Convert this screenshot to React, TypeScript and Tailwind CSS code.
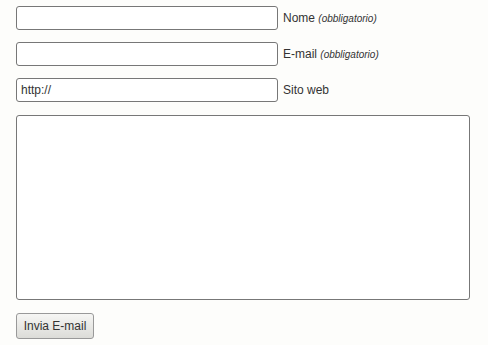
export default function App() {
  const field =
    'h-6 w-[262px] rounded-[3px] border border-[#777] bg-white px-1 text-[12px] text-[#333] outline-none';

  return (
    <div className="min-h-[345px] bg-[#fdfdfb] px-4 pt-[6px] font-['Liberation_Sans',Arial,sans-serif] text-[12px] text-[#333]">
      <div className="flex items-center gap-[5px]">
        <input className={field} />
        <label>
          Nome <em className="text-[10px]">(obbligatorio)</em>
        </label>
      </div>
      <div className="mt-3 flex items-center gap-[5px]">
        <input className={field} />
        <label>
          E-mail <em className="text-[10px]">(obbligatorio)</em>
        </label>
      </div>
      <div className="mt-3 flex items-center gap-[5px]">
        <input className={field} defaultValue="http://" />
        <label>Sito web</label>
      </div>
      <textarea className="mt-[13px] block h-[185px] w-[454px] resize-none rounded-[3px] border border-[#777] bg-white outline-none" />
      <button className="mt-[13px] h-[26px] w-[78px] rounded-[3px] border border-[#999] bg-gradient-to-b from-[#f6f6f4] to-[#dcdcd8] text-[12px] text-[#333]">
        Invia E-mail
      </button>
    </div>
  );
}
